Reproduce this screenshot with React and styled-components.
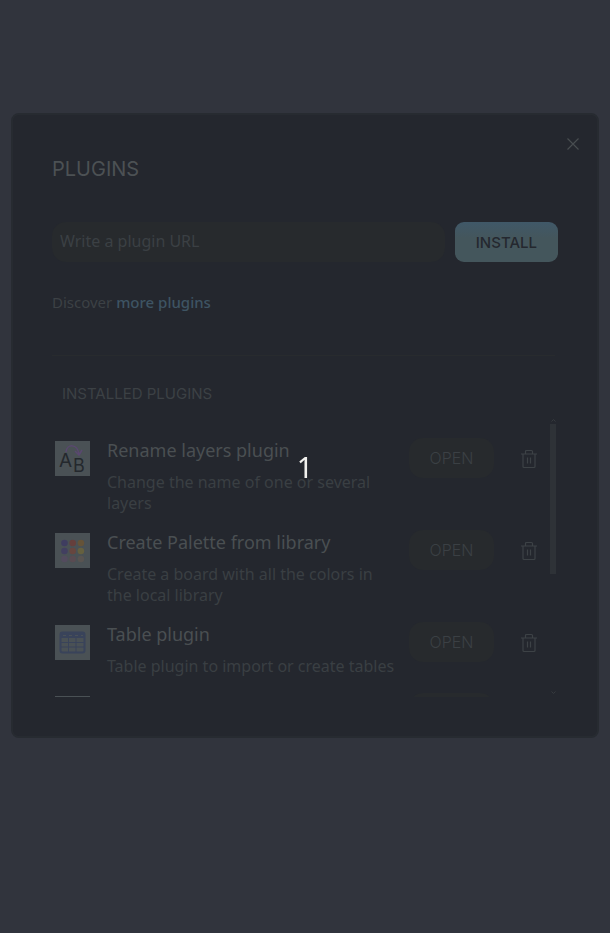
import React from "react";
import styled, { createGlobalStyle } from "styled-components";

const GlobalStyle = createGlobalStyle`
  * { box-sizing: border-box; }
  body {
    margin: 0;
    background: #31343d;
    color: #3c4145;
    font-family: "Noto Sans", sans-serif;
    font-size: 16px;
  }
  h1, h2, h3, p, ul { margin: 0; padding: 0; font-weight: 400; }
  button, input { font: inherit; color: inherit; }
`;

const Page = styled.main`
  min-height: 100vh;
  padding: 113px 11px 40px;
`;

const Modal = styled.section`
  position: relative;
  padding: 41px 39px 39px;
  background: #24272e;
  border: 2px solid #272b31;
  border-radius: 8px;
`;

const CloseButton = styled.button`
  position: absolute;
  top: 17px;
  right: 12px;
  display: flex;
  padding: 4px;
  border: 0;
  background: none;
  color: #484d50;
`;

const Title = styled.h1`
  font-family: Inter, sans-serif;
  font-size: 20px;
  line-height: 26px;
  color: #4c5154;
`;

const InstallForm = styled.form`
  display: flex;
  gap: 10px;
  margin: 40px 0 28px;
`;

const UrlInput = styled.input`
  flex: 1;
  min-width: 0;
  height: 40px;
  padding: 0 8px 2px;
  border: 0;
  border-radius: 14px;
  background: #272a2d;
  outline: none;
  &::placeholder { color: #3b4044; opacity: 1; }
`;

const InstallButton = styled.button`
  height: 40px;
  padding: 0 21px;
  border: 0;
  border-radius: 9px;
  background: linear-gradient(#405868, #44565c 40%);
  color: #24282f;
  font-family: Inter, sans-serif;
  font-size: 15px;
  font-weight: 500;
`;

const Discover = styled.p`
  font-size: 15px;
  line-height: 24px;
  color: #3c4145;
`;

const Link = styled.a`
  color: #3e5463;
  font-weight: 500;
  text-decoration: none;
`;

const Divider = styled.hr`
  margin: 41px 3px 26px 0;
  border: 0;
  border-top: 1px solid #282b2e;
`;

const SectionTitle = styled.h2`
  padding-left: 10px;
  font-family: Inter, sans-serif;
  font-size: 15px;
  line-height: 24px;
  color: #3c4145;
`;

const ListFrame = styled.div`
  display: flex;
  margin-top: 12px;
  height: 279px;
`;

const PluginList = styled.ul`
  flex: 1;
  display: flex;
  flex-direction: column;
  gap: 16px;
  padding: 20px 13px 0 3px;
  overflow: hidden;
  list-style: none;
`;

const PluginRow = styled.li`
  flex: none;
  display: flex;
  align-items: flex-start;
`;

const PluginIcon = styled.svg`
  flex: none;
  width: 35px;
  height: 35px;
  margin: 3px 17px 0 0;
  background: #4a5155;
`;

const PluginText = styled.div`
  flex: 1;
  display: flex;
  flex-direction: column;
  gap: 10px;
  min-width: 0;
`;

const PluginName = styled.h3`
  font-size: 18px;
  line-height: 24px;
  color: #4a4f52;
`;

const PluginDescription = styled.p`
  line-height: 21px;
  color: #3a3f43;
`;

const OpenButton = styled.button`
  flex: none;
  width: 85px;
  height: 40px;
  margin: 0 27px 0 12px;
  padding: 0;
  border: 0;
  border-radius: 14px;
  background: #272a2d;
  color: #3b4044;
  font-family: Inter, sans-serif;
  font-size: 16px;
  font-weight: 300;
`;

const RemoveButton = styled.button`
  flex: none;
  display: flex;
  margin-top: 11px;
  padding: 0;
  border: 0;
  background: none;
  color: #3d4246;
`;

const ScrollRail = styled.div`
  flex: none;
  display: flex;
  flex-direction: column;
  align-items: center;
  width: 6px;
  margin-right: 2px;
  color: #363a3e;
`;

const ScrollThumb = styled.div`
  width: 6px;
  height: 150px;
  margin-bottom: auto;
  background: #2e3237;
`;

const Countdown = styled.div`
  position: fixed;
  inset: 0;
  display: flex;
  align-items: center;
  justify-content: center;
  pointer-events: none;
  font-size: 29px;
  line-height: 40px;
  color: #f1f1ee;
`;

const RenameArt = () => (
  <>
    <path d="M11 11C12 3 22 2 24 13M20 10l4 4 3-5" fill="none" stroke="#5a4870" strokeWidth="1.5" />
    <text x="4" y="26" fontFamily="Inter" fontSize="19" fill="#24282d">A</text>
    <text x="18" y="31" fontFamily="Inter" fontSize="18" fill="#24282d">B</text>
  </>
);

const swatches = [
  ["#3f3d60", "#653f3c", "#655338"],
  ["#423f60", "#67463f", "#65603f"],
  ["#534b5e", "#594b52", "#595451"],
];

const PaletteArt = () =>
  swatches.map((row, y) =>
    row.map((color, x) => (
      <circle key={`${x}-${y}`} cx={9.5 + x * 8.2} cy={10 + y * 8} r="3.3" fill={color} />
    ))
  );

const TableArt = () => (
  <g fill="none" stroke="#39435a">
    <rect x="5.5" y="7.5" width="24" height="20" rx="2" strokeWidth="2" />
    <path d="M6 10.500h23" strokeWidth="5" />
    <path d="M6 17.500h23M6 22h23M13.500 13v14M21 13v14" strokeWidth="1" />
    <path d="M8 10.500h20" stroke="#4a5158" strokeDasharray="3 3" />
  </g>
);

const plugins = [
  { name: "Rename layers plugin", description: "Change the name of one or several layers", Art: RenameArt },
  { name: "Create Palette from library", description: "Create a board with all the colors in the local library", Art: PaletteArt },
  { name: "Table plugin", description: "Table plugin to import or create tables", Art: TableArt },
  { name: "", description: "", Art: null },
];

const TrashIcon = () => (
  <svg width="16" height="20" viewBox="0 0 16 20" fill="none" stroke="currentColor" strokeWidth="1.2">
    <path d="M0 5h16M4.500 5V2.500Q4.500 1.500 5.500 1.500h5q1 0 1 1V5M2 5v12.500q0 1 1 1h10q1 0 1-1V5M6.500 8.500v6M9.500 8.500v6" />
  </svg>
);

const Chevron = ({ d }) => (
  <svg width="5" height="6" viewBox="0 0 5 6" fill="none" stroke="currentColor">
    <path d={d} />
  </svg>
);

export default function App() {
  return (
    <Page>
      <GlobalStyle />
      <Modal aria-labelledby="title">
        <CloseButton aria-label="Close">
          <svg width="16" height="16" viewBox="0 0 16 16" fill="none" stroke="currentColor" strokeWidth="1.2">
            <path d="M2.500 2.500l11 11M13.500 2.500l-11 11" />
          </svg>
        </CloseButton>
        <Title id="title">PLUGINS</Title>
        <InstallForm onSubmit={(event) => event.preventDefault()}>
          <UrlInput type="text" aria-label="Plugin URL" placeholder="Write a plugin URL" />
          <InstallButton type="submit">INSTALL</InstallButton>
        </InstallForm>
        <Discover>
          Discover <Link href="#plugins">more plugins</Link>
        </Discover>
        <Divider />
        <SectionTitle>INSTALLED PLUGINS</SectionTitle>
        <ListFrame>
          <PluginList>
            {plugins.map(({ name, description, Art }) => (
              <PluginRow key={name}>
                <PluginIcon viewBox="0 0 35 35" aria-hidden="true">{Art && <Art />}</PluginIcon>
                <PluginText>
                  {name && <PluginName>{name}</PluginName>}
                  {description && <PluginDescription>{description}</PluginDescription>}
                </PluginText>
                <OpenButton aria-label="Open plugin">{name && "OPEN"}</OpenButton>
                <RemoveButton aria-label="Remove plugin">
                  <TrashIcon />
                </RemoveButton>
              </PluginRow>
            ))}
          </PluginList>
          <ScrollRail aria-hidden="true">
            <Chevron d="M0.500 3.500l2-2 2 2" />
            <ScrollThumb />
            <Chevron d="M0.500 0.500l2 2 2-2" />
          </ScrollRail>
        </ListFrame>
      </Modal>
      <Countdown>1</Countdown>
    </Page>
  );
}
